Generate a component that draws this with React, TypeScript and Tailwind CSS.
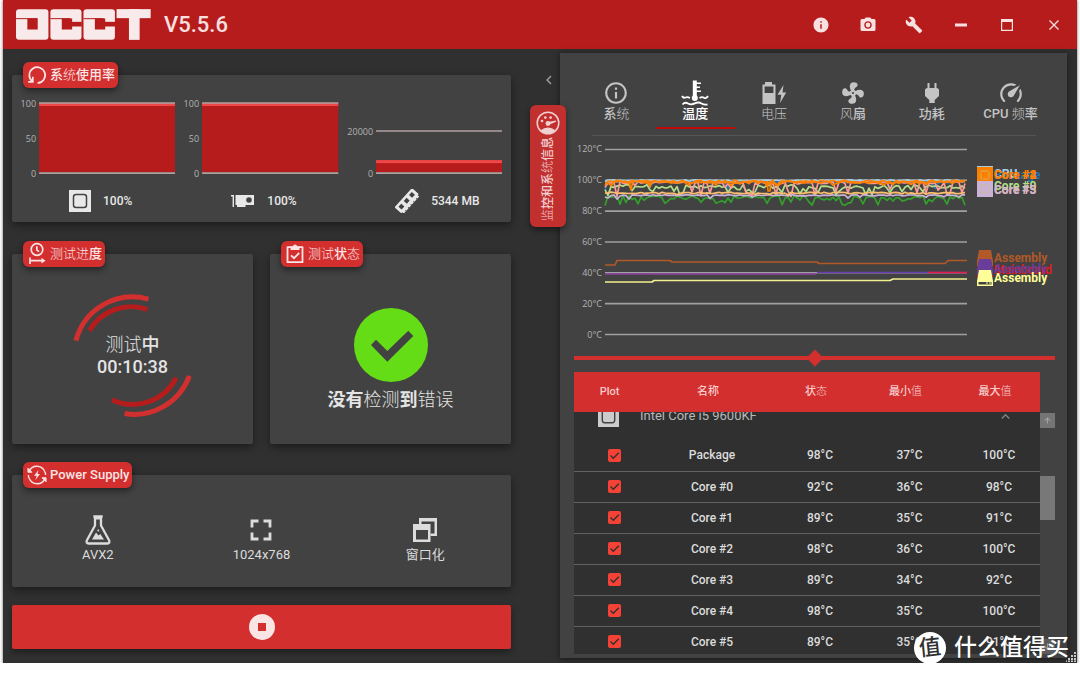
import { Fragment, type ReactNode } from "react";
import { MdBuild, MdCameraAlt, MdInfo, MdInfoOutline, MdKeyboardArrowUp, MdArrowUpward, MdChevronLeft } from "react-icons/md";

type IconProps = { className?: string };

const Logo = () => (
  <svg viewBox="50 27 404 92" className="w-[135px] h-[31px]" role="img" aria-label="OCCT">
    <g fill="#f8eaea">
      <rect x="50" y="27" width="97" height="92" rx="9" />
      <rect x="153" y="27" width="93" height="92" rx="9" />
      <rect x="252" y="27" width="94" height="92" rx="9" />
      <rect x="351" y="27" width="102" height="27" />
      <rect x="388" y="27" width="32" height="92" />
    </g>
    <g fill="#b71c1c">
      <rect x="50" y="54" width="64" height="3" />
      <rect x="84" y="55" width="31" height="33" />
      <rect x="153" y="54" width="60" height="3" />
      <rect x="187" y="55" width="31" height="33" />
      <rect x="210" y="65" width="37" height="14" />
      <rect x="252" y="54" width="60" height="3" />
      <rect x="286" y="55" width="31" height="33" />
      <rect x="310" y="65" width="37" height="14" />
    </g>
  </svg>
);

const CpuIcon = ({ className }: IconProps) => (
  <svg viewBox="0 0 22 22" className={className}>
    <rect width="22" height="22" fill="currentColor" />
    <rect x="4.5" y="4.5" width="13" height="13" rx="2.5" fill="none" stroke="#424242" strokeWidth="1.5" />
  </svg>
);

const GpuIcon = ({ className }: IconProps) => (
  <svg viewBox="0 0 24 24" className={className} fill="currentColor">
    <path d="M0 6H3V18H1.6V7.4H0ZM4.5 6H23V16H14.5V18H6V16H4.5Z" />
    <circle cx="18" cy="11" r="2.8" fill="#424242" />
  </svg>
);

const RamIcon = ({ className }: IconProps) => (
  <svg viewBox="0 0 24 24" className={className}>
    <g transform="rotate(-48 12 12)">
      <path d="M-1 7H25V16H23.5V18H0.5V16H-1Z" fill="currentColor" />
      <path d="M4 18.2V17M8 18.2V17M12 18.2V17M16 18.2V17M20 18.2V17" stroke="#424242" />
      <g fill="#424242">
        <rect x="2" y="9.5" width="4.2" height="4.2" />
        <rect x="9.9" y="9.5" width="4.2" height="4.2" />
        <rect x="17.8" y="9.5" width="4.2" height="4.2" />
      </g>
    </g>
  </svg>
);

const RefreshIcon = ({ className }: IconProps) => (
  <svg viewBox="0 0 20 20" className={className} fill="none" stroke="currentColor" strokeWidth="1.7">
    <path d="M5 16A7.9 7.9 0 1 1 10.5 18" />
    <path d="M1.2 16.8H5.8V11.8" />
  </svg>
);

const ProgressIcon = ({ className }: IconProps) => (
  <svg viewBox="0 0 20 24" className={className} fill="none" stroke="currentColor" strokeWidth="1.7">
    <circle cx="10" cy="7.5" r="5.8" />
    <path d="M9.8 4.2V7.8L12 9.6M3 15.5V22M3 18.7H15" />
    <path d="M14.5 15.8L18.5 18.7L14.5 21.6Z" fill="currentColor" stroke="none" />
  </svg>
);

const ClipboardIcon = ({ className }: IconProps) => (
  <svg viewBox="0 0 20 20" className={className} fill="none" stroke="currentColor" strokeWidth="1.8">
    <path d="M2.5 3.2H17.5V18.2H2.5Z" strokeLinejoin="round" />
    <path d="M5.5 2.5H8A2 2 0 0 1 12 2.5H14.5V6H5.5Z" fill="currentColor" stroke="none" />
    <path d="M6 11.3L9 14.2L14.2 9" />
  </svg>
);

const PowerIcon = ({ className }: IconProps) => (
  <svg viewBox="0 0 22 22" className={className} fill="none" stroke="currentColor" strokeWidth="1.5">
    <path d="M2.2 7A9.4 9.4 0 0 1 19.5 7.2M19.8 15A9.4 9.4 0 0 1 2.5 14.8M1.6 11V12.5A9.4 9.4 0 0 0 2.5 14.8M20.4 11V9.5A9.4 9.4 0 0 0 19.5 7.2" />
    <path d="M1 3.5V8H5.5ZM21 18.5V14H16.5Z" fill="currentColor" strokeWidth="1" />
    <path d="M12.6 5.5L7.8 11.8H10.6L9.2 16.6L14.3 10H11.6Z" fill="currentColor" stroke="none" />
  </svg>
);

const GaugeIcon = ({ className }: IconProps) => (
  <svg viewBox="0 0 24 24" className={className} fill="currentColor">
    <circle cx="12" cy="12" r="10.8" fill="none" stroke="currentColor" strokeWidth="1.5" />
    <path d="M4.5 19.3Q12 13.5 19.5 19.3Q12 26 4.5 19.3Z" />
    <circle cx="12" cy="12.5" r="2.4" />
    <path d="M12.3 11L19.8 9.4L20 10.7L13 13.8Z" />
    <circle cx="6" cy="10" r="1.3" />
    <circle cx="9.3" cy="6.6" r="1.3" />
    <circle cx="14.6" cy="6.6" r="1.3" />
  </svg>
);

const TemperatureIcon = ({ className }: IconProps) => (
  <svg viewBox="0 0 28 26" className={className} fill="none" stroke="currentColor" strokeWidth="1.8">
    <path d="M13.8 0.5V18" strokeWidth="4" />
    <path d="M14 3.2H20M14 7.2H19M14 11.2H20" strokeWidth="1.6" />
    <circle cx="13.8" cy="18" r="3" fill="currentColor" stroke="none" />
    <path d="M1 16Q2.5 18.5 4.5 17.5T9 18M18.5 18Q21 16.5 23 17.8T27 16" />
    <path d="M1.5 24.5Q4 21.6 7 23.4T13.8 23.4T20.5 23.4T26.5 24.5" />
  </svg>
);

const VoltageIcon = ({ className }: IconProps) => (
  <svg viewBox="0 0 26 26" className={className} fill="currentColor">
    <path d="M4 2H11V4.5H14.5V24H1.5V4.5H4ZM3.6 6.6V13H12.4V6.6Z" fillRule="evenodd" />
    <path d="M22.5 5L16.5 14.8H20.3L19 23L25.2 12.4H21.5Z" />
  </svg>
);

const FanIcon = ({ className }: IconProps) => (
  <svg viewBox="0 0 24 24" className={className} fill="currentColor">
    <path d="M12,11A1,1 0 0,0 11,12A1,1 0 0,0 12,13A1,1 0 0,0 13,12A1,1 0 0,0 12,11M12.5,2C17,2 17.11,5.57 14.75,6.75C13.76,7.24 13.32,8.29 13.13,9.22C13.61,9.42 14.03,9.73 14.35,10.13C18.05,8.13 22.03,8.92 22.03,12.5C22.03,17 18.46,17.1 17.28,14.73C16.78,13.74 15.72,13.3 14.79,13.11C14.59,13.59 14.28,14 13.88,14.34C15.87,18.03 15.08,22 11.5,22C7,22 6.91,18.42 9.27,17.24C10.25,16.75 10.69,15.71 10.89,14.79C10.4,14.59 9.97,14.27 9.65,13.87C5.96,15.85 2,15.07 2,11.5C2,7 5.56,6.89 6.74,9.26C7.24,10.25 8.29,10.68 9.22,10.87C9.41,10.39 9.73,9.97 10.14,9.65C8.15,5.96 8.94,2 12.5,2Z" />
  </svg>
);

const PlugIcon = ({ className }: IconProps) => (
  <svg viewBox="0 0 24 24" className={className} fill="currentColor">
    <path d="M16.5,7V2H14.5V7H9.5V2H7.5V7C6,7 5,8 5,9V15L9.3,19V22H14.7V19L19,15V9C19,8 18,7 16.5,7Z" />
  </svg>
);

const SpeedIcon = ({ className }: IconProps) => (
  <svg viewBox="0 0 24 24" className={className} fill="currentColor">
    <path d="M12,16A3,3 0 0,1 9,13C9,11.88 9.61,10.9 10.5,10.39L20.21,4.77L14.68,14.35C14.18,15.33 13.17,16 12,16M12,3C13.81,3 15.5,3.5 16.97,4.32L14.87,5.53C14,5.19 13,5 12,5A8,8 0 0,0 4,13C4,15.21 4.89,17.21 6.34,18.65H6.35C6.74,19.04 6.74,19.67 6.35,20.06C5.96,20.45 5.32,20.45 4.93,20.07V20.07C3.12,18.26 2,15.76 2,13A10,10 0 0,1 12,3M22,13C22,15.76 20.88,18.26 19.07,20.07V20.07C18.68,20.45 18.05,20.45 17.66,20.06C17.27,19.67 17.27,19.04 17.66,18.65V18.65C19.11,17.2 20,15.21 20,13C20,12 19.81,11 19.46,10.1L20.67,8C21.5,9.5 22,11.18 22,13Z" />
  </svg>
);

const FlaskIcon = ({ className }: IconProps) => (
  <svg viewBox="0 0 26 30" className={className} fill="none" stroke="currentColor" strokeWidth="2.3" strokeLinejoin="round">
    <path d="M8.3 1.5H17.7M10 2V10.5L1.8 25.5Q1 28.5 3.5 28.5H22.5Q25 28.5 24.2 25.5L16 10.5V2" />
    <path d="M10 1H16V4.5H10Z" fill="currentColor" stroke="none" />
    <path d="M7 24.5L11 17.5L13.5 20.5L15.3 19L19 24.5Z" fill="currentColor" stroke="none" />
    <circle cx="13.3" cy="15.5" r="1" fill="currentColor" stroke="none" />
  </svg>
);

const ResolutionIcon = ({ className }: IconProps) => (
  <svg viewBox="0 0 22 22" className={className} fill="none" stroke="currentColor" strokeWidth="2.8">
    <path d="M2 8.5V2H8.5M13.5 2H20V8.5M20 13.5V20H13.5M8.5 20H2V13.5" />
  </svg>
);

const WindowIcon = ({ className }: IconProps) => (
  <svg viewBox="0 0 24 24" className={className} fill="currentColor" fillRule="evenodd">
    <path d="M0 6H17.5V24H0ZM3 12V21.5H15V12Z" />
    <path d="M6 0H24V18H17.5V15.5H21.5V3.5H8.5V6H6Z" />
  </svg>
);

// glyphs that come from the thinner fallback face
const Thin = ({ children }: { children: ReactNode }) => <span className="font-light">{children}</span>;

type CardProps = { icon: ReactNode; title: ReactNode; className?: string; children: ReactNode };

const Card = ({ icon, title, className = "", children }: CardProps) => (
  <section className={`flex flex-col rounded-xs bg-[#424242] shadow-[0_3px_8px_rgba(0,0,0,0.45)] ${className}`}>
    <h2 className="-mt-[13px] ml-[11px] flex h-[26px] items-center gap-[3px] self-start rounded-md bg-[#d32f2f] pr-[3px] pl-1 text-[13px] font-medium text-[#fbe4e4] shadow-[0_3px_6px_rgba(0,0,0,0.45)]">
      {icon}
      {title}
    </h2>
    {children}
  </section>
);

type UsageProps = {
  icon: ReactNode;
  value: string;
  left: number;
  labels: { text: string; y: number }[];
  top: number;
  rowClass: string;
};

const Usage = ({ icon, value, left, labels, top, rowClass }: UsageProps) => (
  <div className="min-w-0">
    <svg viewBox="0 0 163 82" className="block w-full">
      <rect x={left} y={top} width={163 - left} height={75 - top} fill="#b71c1c" />
      <rect x={left} y={top} width={163 - left} height="3" fill="#ef4848" />
      {labels.map(({ text, y }) => (
        <Fragment key={text}>
          {text !== "50" && <line x1={left} x2="163" y1={y} y2={y} stroke="#b0a0a0" strokeWidth="1.6" />}
          <text x={left - 3} y={y + 4} textAnchor="end" className="fill-[#b4b4b4] font-['Open_Sans',sans-serif] text-[9px]">
            {text}
          </text>
        </Fragment>
      ))}
    </svg>
    <div className={`mt-[10px] flex h-6 items-center justify-center gap-3 text-[12px] font-medium text-[#e8e8e8] ${rowClass}`}>
      {icon}
      {value}
    </div>
  </div>
);

const percentLabels = [
  { text: "100", y: 6 },
  { text: "50", y: 41 },
  { text: "0", y: 76 },
];
const memoryLabels = [
  { text: "20000", y: 34 },
  { text: "0", y: 76 },
];

const options = [
  { icon: <FlaskIcon className="h-[30px] w-[26px]" />, label: "AVX2" },
  { icon: <ResolutionIcon className="size-[22px]" />, label: "1024x768" },
  { icon: <WindowIcon className="size-6" />, label: "窗口化" },
];

const tabs = [
  { icon: <MdInfoOutline className="size-[26px]" />, label: <>系<Thin>统</Thin></>, active: false },
  { icon: <TemperatureIcon className="h-[26px] w-7" />, label: "温度", active: true },
  { icon: <VoltageIcon className="size-[26px]" />, label: <Thin>电压</Thin>, active: false },
  { icon: <FanIcon className="size-[26px]" />, label: <><Thin>风</Thin>扇</>, active: false },
  { icon: <PlugIcon className="size-[24px]" />, label: "功耗", active: false },
  { icon: <SpeedIcon className="size-[26px]" />, label: <>CPU <Thin>频</Thin>率</>, active: false },
];

const tempY = (t: number) => 194.5 - t * 1.542;

// jittered line around a base temperature, with occasional dips
const noise = (seed: number, base: number, spread: number, dip: number, chance: number) => {
  let s = seed;
  const rnd = () => {
    s = (s * 16807) % 2147483647;
    return s / 2147483647;
  };
  const points: string[] = [];
  for (let x = 45; x <= 407; x += 3) {
    const drop = rnd() < chance ? dip * rnd() : 0;
    const t = base + (rnd() - 0.5) * spread - drop;
    points.push(`${x},${tempY(t).toFixed(1)}`);
  }
  return points.join(" ");
};

const lines = [
  { color: "#1f78b4", points: noise(311, 99, 1, 6, 0.07) },
  { color: "#a6cee3", points: noise(97, 100, 0.6, 1, 0.1) },
  { color: "#33a02c", points: noise(4242, 89, 2, 5, 0.4) },
  { color: "#b2df8a", points: noise(777, 96, 2.5, 5, 0.4) },
  { color: "#fb9a99", points: noise(1234, 98.5, 1.5, 9, 0.25) },
  { color: "#cab2d6", points: noise(5150, 90.3, 0.8, 2.5, 0.1) },
  { color: "#fdbf6f", points: noise(63, 91.8, 1, 1, 0.1) },
  { color: "#ff7f00", points: noise(9001, 99.4, 1.4, 2.5, 0.15) },
  { color: "#ff7f00", points: noise(2718, 98.8, 1.4, 2, 0.15) },
  { color: "#ff7f00", points: "69,41 71,50 73,41" },
  { color: "#ff7f00", points: "88,41 90,47 92,41" },
  { color: "#ff7f00", points: "207,41 208,51 210,51 211,41" },
  { color: "#b15928", points: "45,125 55,125 57,120.5 110,120.5 112,122 257,122 259,123.5 385,123.5 388,120.5 407,120.5" },
  { color: "#8e3fa0", points: "45,134 256,134" },
  { color: "#6a3db0", points: "257,132.5 407,132.5" },
  { color: "#e31a4c", points: "368,132.5 407,132.5" },
  { color: "#f3f08f", points: "45,142 92,142 94,140.5 330,140.5 333,139 407,139" },
];

const LegendChip = ({ y, color }: { y: number; color: string }) => (
  <g>
    <rect x="417" y={y} width="16" height="16" fill={color} />
    <rect x="421" y={y + 4} width="8" height="8" rx="1" fill="none" stroke="#c8c080" strokeOpacity="0.8" strokeDasharray="6 1" />
  </g>
);

const LegendDrive = ({ y, color }: { y: number; color: string }) => (
  <g>
    <path d={`M419 ${y}H431L433 ${y + 11}V${y + 16}H417V${y + 11}Z`} fill={color} />
    <path d={`M418.5 ${y + 12}H431.5V${y + 14.5}H418.5Z`} fill="#424242" />
    <path d={`M426 ${y + 13}H428M429 ${y + 13}H431`} stroke={color} />
  </g>
);

const TemperatureChart = () => (
  <svg viewBox="0 0 507 210" className="mt-1 block w-full" role="img" aria-label="温度">
    {[120, 100, 80, 60, 40, 20, 0].map((t) => (
      <Fragment key={t}>
        <line x1="45" x2="407" y1={tempY(t)} y2={tempY(t)} stroke="#a0a0a0" strokeWidth="1.6" />
        <text x="42" y={tempY(t) + 3} textAnchor="end" className="fill-[#b4b4b4] font-['Open_Sans',sans-serif] text-[9px]">
          {t}°C
        </text>
      </Fragment>
    ))}
    {lines.map(({ color, points }, i) => (
      <polyline key={i} points={points} fill="none" stroke={color} strokeWidth="1.7" strokeLinejoin="round" />
    ))}
    <LegendChip y={26} color="#a6cee3" />
    <LegendChip y={27} color="#ff7f00" />
    <LegendChip y={41} color="#cab2d6" />
    <LegendDrive y={110} color="#b15928" />
    <LegendDrive y={121} color="#e31a1c" />
    <LegendDrive y={119} color="#6a3d9a" />
    <LegendDrive y={130} color="#ffff99" />
    <g className="text-[12px] font-bold">
      <text x="434" y="39" fill="#1f78b4">Package</text>
      <text x="434" y="38" fill="#a6cee3">CPU</text>
      <text x="434" y="39" fill="#ff7f00">Core #2</text>
      <text x="434" y="39" fill="#ff7f00">Core #4</text>
      <text x="434" y="50" fill="#b2df8a">Core #0</text>
      <text x="434" y="54" fill="#fdbf6f">Core #3</text>
      <text x="434" y="54" fill="#cab2d6">Core #5</text>
      <text x="434" y="122" fill="#b15928">Assembly</text>
      <text x="434" y="134" fill="#e31a1c">Mainboard</text>
      <text x="434" y="133" fill="#6a3d9a">Assembly</text>
      <text x="434" y="142" fill="#ffff99">Assembly</text>
    </g>
  </svg>
);

const sensors = [
  { name: "Package", now: "98°C", min: "37°C", max: "100°C" },
  { name: "Core #0", now: "92°C", min: "36°C", max: "98°C" },
  { name: "Core #1", now: "89°C", min: "35°C", max: "91°C" },
  { name: "Core #2", now: "98°C", min: "36°C", max: "100°C" },
  { name: "Core #3", now: "89°C", min: "34°C", max: "92°C" },
  { name: "Core #4", now: "98°C", min: "35°C", max: "100°C" },
  { name: "Core #5", now: "89°C", min: "35°C", max: "91°C" },
];

const SensorTable = () => (
  <div className="mt-[6px] mr-3 ml-[14px] flex max-h-[282px] overflow-hidden">
    <table className="flex-1 table-fixed border-collapse bg-[#303030] text-center text-[12px] font-medium text-[#dcdcdc]">
      <colgroup>
        <col className="w-[71px]" />
        <col className="w-[134px]" />
        <col className="w-[82px]" />
        <col className="w-[97px]" />
        <col className="w-[82px]" />
      </colgroup>
      <thead className="bg-[#d32f2f] text-[11px] text-[#f6c9c9]">
        <tr className="h-10">
          <th className="font-medium">Plot</th>
          <th className="pr-2 font-medium">名称</th>
          <th className="pr-2 font-medium">状<Thin>态</Thin></th>
          <th className="pr-2 font-medium">最小<Thin>值</Thin></th>
          <th className="pr-2 font-medium">最大<Thin>值</Thin></th>
        </tr>
      </thead>
      <tbody>
        <tr>
          <td colSpan={5} className="p-0">
            <div className="flex h-7 flex-col justify-end overflow-hidden">
              <div className="flex h-12 shrink-0 items-center pr-[26px] pl-6 text-[13px] font-normal text-[#b8b8b8]">
                <CpuIcon className="mr-[21px] size-[21px] text-[#cccccc]" />
                <span className="flex-1 text-left">Intel Core i5 9600KF</span>
                <MdKeyboardArrowUp className="size-[17px] text-[#808080]" />
              </div>
            </div>
          </td>
        </tr>
        {sensors.map(({ name, now, min, max }) => (
          <tr key={name} className="h-[31px] border-b border-[#616161]">
            <td className="pl-[9px]">
              <label className="grid place-items-center">
                <input
                  type="checkbox"
                  defaultChecked
                  aria-label={name}
                  className="col-start-1 row-start-1 size-[13px] appearance-none rounded-xs bg-[#f44336]"
                />
                <svg viewBox="0 0 13 13" className="pointer-events-none col-start-1 row-start-1 size-[13px]">
                  <path d="M2.5 6.5L5.3 9.3L10.8 3.8" fill="none" stroke="#303030" strokeWidth="1.3" />
                </svg>
              </label>
            </td>
            <td>{name}</td>
            <td>{now}</td>
            <td>{min}</td>
            <td>{max}</td>
          </tr>
        ))}
      </tbody>
    </table>
    {/* scroll rail */}
    <div className="flex w-[15px] flex-col justify-between pt-[41px]">
      <div className="flex flex-col gap-12">
        <button type="button" aria-label="上" className="grid h-[15px] place-items-center bg-[#757575] text-[#b0b0b0]">
          <MdArrowUpward className="size-[9px]" />
        </button>
        <div className="h-11 bg-[#787878]" />
      </div>
      <button type="button" aria-label="下" className="grid h-[15px] place-items-center bg-[#5c5c5c] text-[#b0b0b0]">
        <MdArrowUpward className="size-[9px] rotate-180" />
      </button>
    </div>
  </div>
);

const TitleBar = () => (
  <header className="flex h-[49px] items-center bg-[#b71c1c] pl-[13px] text-[#f8e0e0]">
    <Logo />
    <h1 className="ml-[13px] flex-1 text-[22px] font-medium">V5.5.6</h1>
    <div className="grid h-full w-[279px] grid-cols-6">
      <button type="button" aria-label="信息" className="grid place-items-center">
        <MdInfo className="size-[18px]" />
      </button>
      <button type="button" aria-label="截图" className="grid place-items-center">
        <MdCameraAlt className="size-[18px]" />
      </button>
      <button type="button" aria-label="设置" className="grid place-items-center">
        <MdBuild className="size-[18px]" />
      </button>
      <button type="button" aria-label="最小化" className="grid place-items-center">
        <svg viewBox="0 0 12 12" className="size-3" fill="none" stroke="currentColor" strokeWidth="3">
          <path d="M0 6H12" />
        </svg>
      </button>
      <button type="button" aria-label="最大化" className="grid place-items-center">
        <svg viewBox="0 0 12 12" className="size-3" fill="none" stroke="currentColor">
          <path d="M0 1.5H12" strokeWidth="3" />
          <path d="M0.6 1V11.4H11.4V1" strokeWidth="1.2" />
        </svg>
      </button>
      <button type="button" aria-label="关闭" className="grid place-items-center">
        <svg viewBox="0 0 10 10" className="size-[10px]" fill="none" stroke="currentColor" strokeWidth="1.3">
          <path d="M0.5 0.5L9.5 9.5M9.5 0.5L0.5 9.5" />
        </svg>
      </button>
    </div>
  </header>
);

const Overview = () => (
  <div className="flex min-w-0 flex-col pt-[26px] pb-[14px]">
    <Card icon={<RefreshIcon className="size-5" />} title={<span>系<Thin>统</Thin>使用率</span>} className="pb-[9px]">
      <div className="mt-[9px] mr-[9px] grid grid-cols-3">
        <Usage icon={<CpuIcon className="size-[22px]" />} value="100%" left={27} labels={percentLabels} top={6} rowClass="pl-[14px]" />
        <Usage icon={<GpuIcon className="size-6" />} value="100%" left={27} labels={percentLabels} top={6} rowClass="pl-[14px]" />
        <Usage icon={<RamIcon className="size-6" />} value="5344 MB" left={37} labels={memoryLabels} top={63} rowClass="pl-[34px]" />
      </div>
    </Card>

    <div className="mt-8 grid grid-cols-2 gap-[17px]">
      <Card icon={<ProgressIcon className="h-6 w-5" />} title={<span><Thin>测试进</Thin>度</span>} className="pb-[27px]">
        <div className="mt-[27px] grid place-items-center">
          <svg viewBox="0 0 124 124" className="col-start-1 row-start-1 size-[123px]" fill="none">
            <path d="M5 47A59 59 0 0 1 78 5.2M119.3 82.5A59 59 0 0 1 54 120.5" stroke="#d32f2f" strokeWidth="5" />
            <path d="M18.5 37A49 49 0 0 1 77 15.6M106 84.5A49 49 0 0 1 41.3 106.5" stroke="#b71c1c" strokeWidth="5" />
          </svg>
          <div className="col-start-1 row-start-1 text-center text-[18px] leading-[22px] font-medium text-[#e4e4e4]">
            <p><Thin>测试</Thin>中</p>
            <p>00:10:38</p>
          </div>
        </div>
      </Card>
      <Card icon={<ClipboardIcon className="size-5" />} title={<span><Thin>测试</Thin>状<Thin>态</Thin></span>}>
        <div className="mt-[41px] flex flex-col items-center gap-[5px]">
          <svg viewBox="0 0 74 74" className="size-[74px]">
            <circle cx="37" cy="37" r="37" fill="#64dd17" />
            <path d="M17 37L22 31.7L33.3 43L54.3 22.7L59.3 28L33.3 53.7Z" fill="#424242" />
          </svg>
          <p className="text-[18px] leading-[26px] font-bold text-[#e4e4e4]">
            没有<Thin>检测</Thin>到<Thin>错误</Thin>
          </p>
        </div>
      </Card>
    </div>

    <Card icon={<PowerIcon className="size-5" />} title="Power Supply" className="mt-[31px] pb-[23px]">
      <div className="mt-[26px] grid grid-cols-3 px-1">
        {options.map(({ icon, label }) => (
          <div key={label} className="flex flex-col items-center text-[13px] leading-[18px] text-[#dcdcdc]">
            <div className="grid h-8 place-items-center">{icon}</div>
            {label}
          </div>
        ))}
      </div>
    </Card>

    <button
      type="button"
      aria-label="停止"
      className="mt-[18px] grid h-11 place-items-center rounded-xs bg-[#d32f2f] shadow-[0_3px_6px_rgba(0,0,0,0.4)]"
    >
      <svg viewBox="0 0 26 26" className="size-[26px]">
        <circle cx="13" cy="13" r="13" fill="#fbe4e4" />
        <rect x="9" y="9" width="8" height="8" fill="#d32f2f" />
      </svg>
    </button>
  </div>
);

const Gutter = () => (
  <div className="z-10 flex flex-col pt-[22px]">
    <button type="button" aria-label="收起" className="ml-[29px] size-[18px] text-[#9a9a9a]">
      <MdChevronLeft className="size-[18px]" />
    </button>
    <button
      type="button"
      className="mt-4 ml-[19px] flex h-[122px] w-9 flex-col items-center rounded-md bg-[#c22f2f] pt-[6px] text-[#f0d0d0] shadow-[0_3px_6px_rgba(0,0,0,0.45)]"
    >
      <GaugeIcon className="size-6 shrink-0" />
      <span className="mt-[2px] rotate-180 text-[12px] leading-4 font-medium [text-orientation:sideways] [writing-mode:vertical-rl]">
        <Thin>监</Thin>控和系<Thin>统</Thin>信息
      </span>
    </button>
  </div>
);

const Monitoring = () => (
  <div className="mt-1 mb-[5px] min-w-0 bg-[#424242] pt-[27px] pb-1 shadow-[0_1px_6px_rgba(0,0,0,0.5)]">
    <nav className="grid grid-cols-6 px-[17px]">
      {tabs.map(({ icon, label, active }, i) => (
        <button
          key={i}
          type="button"
          className={`flex flex-col items-center border-b-2 pb-[5px] text-[13px] leading-4 font-medium ${
            active ? "border-[#c00a0a] text-white" : "border-transparent text-[#c4c4c4]"
          }`}
        >
          <span className="grid h-[26px] place-items-center">{icon}</span>
          <span>{label}</span>
        </button>
      ))}
    </nav>
    <hr className="mt-[6px] mr-[31px] ml-8 border-[#555555]" />
    <TemperatureChart />
    <div className="mr-3 ml-[14px] grid h-4 place-items-center">
      <div className="col-start-1 row-start-1 h-1 w-full bg-[#d32f2f]" />
      <div className="col-start-1 row-start-1 size-3 rotate-45 bg-[#d32f2f]" />
    </div>
    <SensorTable />
  </div>
);

const Watermark = () => (
  <div className="absolute right-2 -bottom-px z-20 flex items-center gap-2 text-white">
    <span className="grid size-8 place-items-center rounded-full bg-white text-[22px] leading-8 font-medium text-[#303030]">
      <span className="-rotate-6">值</span>
    </span>
    <span className="text-[23px] leading-8 font-medium">什么值得买</span>
  </div>
);

const ResizeGrip = () => (
  <svg viewBox="0 0 10 10" className="absolute right-px bottom-px size-[10px]" fill="#c8c8c8">
    <path d="M8 0H10V2H8ZM5 3H7V5H5ZM8 3H10V5H8ZM2 6H4V8H2ZM5 6H7V8H5ZM8 6H10V8H8ZM0 8.5H1V10H0ZM2 8.5H4V10H2ZM5 8.5H7V10H5ZM8 8.5H10V10H8Z" />
  </svg>
);

const App = () => (
  <div className="bg-white px-[3px] font-['Roboto','Noto_Sans_CJK_SC',sans-serif]">
    <main className="relative bg-[#303030] shadow-[0_0_3px_rgba(0,0,0,0.6)]">
      <TitleBar />
      <div className="grid grid-cols-[minmax(0,499fr)_49px_minmax(0,507fr)] pr-[10px] pl-[9px]">
        <Overview />
        <Gutter />
        <Monitoring />
      </div>
      <Watermark />
      <ResizeGrip />
    </main>
  </div>
);

export default App;
